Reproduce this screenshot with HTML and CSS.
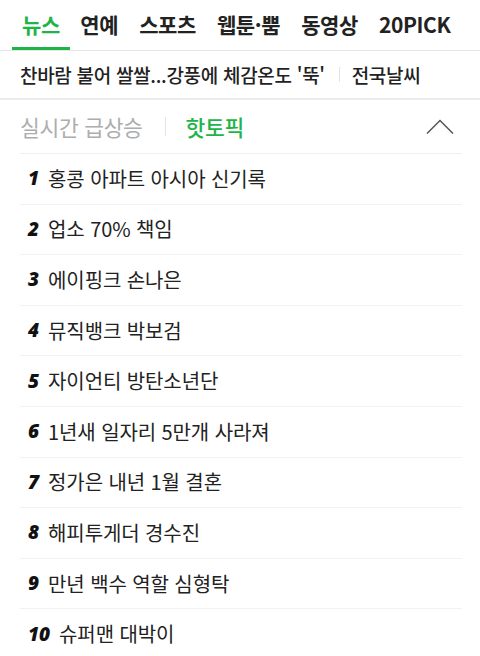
FILE: index.html
```html
<!DOCTYPE html>
<html lang="ko">
<head>
<meta charset="utf-8">
<link rel="stylesheet" href="styles.css">
</head>
<body>
<nav class="tabs">
  <a class="tab active">뉴스</a>
  <a class="tab">연예</a>
  <a class="tab">스포츠</a>
  <a class="tab">웹툰·뿜</a>
  <a class="tab">동영상</a>
  <a class="tab">20PICK</a>
</nav>
<div class="headline">
  <span class="headline-text">찬바람 불어 쌀쌀...강풍에 체감온도 '뚝'</span>
  <span class="vsep"></span>
  <span class="headline-link">전국날씨</span>
</div>
<section class="ranking">
  <div class="rank-head">
    <span class="rh-tab">실시간 급상승</span>
    <span class="vsep tall"></span>
    <span class="rh-tab on">핫토픽</span>
    <svg class="chev" width="28" height="16" viewBox="0 0 28 16"><polyline points="1,14.5 14,1.5 27,14.5" fill="none" stroke="#555" stroke-width="1.5"/></svg>
  </div>
  <ol class="rank-list">
    <li class="row"><span class="num">1</span><span class="title">홍콩 아파트 아시아 신기록</span></li>
    <li class="row"><span class="num">2</span><span class="title">업소 70% 책임</span></li>
    <li class="row"><span class="num">3</span><span class="title">에이핑크 손나은</span></li>
    <li class="row"><span class="num">4</span><span class="title">뮤직뱅크 박보검</span></li>
    <li class="row"><span class="num">5</span><span class="title">자이언티 방탄소년단</span></li>
    <li class="row"><span class="num">6</span><span class="title">1년새 일자리 5만개 사라져</span></li>
    <li class="row"><span class="num">7</span><span class="title">정가은 내년 1월 결혼</span></li>
    <li class="row"><span class="num">8</span><span class="title">해피투게더 경수진</span></li>
    <li class="row"><span class="num">9</span><span class="title">만년 백수 역할 심형탁</span></li>
    <li class="row"><span class="num">10</span><span class="title">슈퍼맨 대박이</span></li>
  </ol>
</section>
</body>
</html>
```
FILE: styles.css
```css
* { box-sizing: border-box; }
html, body { margin: 0; padding: 0; background: #fff; }
body {
  font-family: "Noto Sans CJK KR", "Noto Sans", sans-serif;
  color: #222;
  width: 480px;
  overflow: hidden;
}
.tabs {
  display: flex;
  height: 51px;
  padding-left: 12px;
  border-bottom: 1px solid #e6e6e6;
  white-space: nowrap;
}
.tab {
  display: flex;
  align-items: center;
  padding: 0 10.5px 0;
  font-size: 21px;
  font-weight: 700;
  letter-spacing: -0.4px;
  color: #222;
  border-bottom: 3px solid transparent;
}
.tab.active {
  color: #1eb548;
  border-bottom-color: #1eb548;
  padding: 0 10px 0;
}
.headline {
  display: flex;
  align-items: center;
  height: 49px;
  padding-left: 20px;
  border-bottom: 2px solid #ebebeb;
  font-size: 19px;
  font-weight: 500;
  color: #222;
  letter-spacing: -0.3px;
  white-space: nowrap;
}
.vsep {
  display: inline-block;
  width: 1px;
  height: 15px;
  background: #e3e3e3;
  margin: 0 12px 0 14px;
}
.vsep.tall { height: 19px; margin: 0 20px 0 22px; }
.ranking { padding: 0 18px 0 20px; }
.rank-head {
  display: flex;
  align-items: center;
  height: 54px;
  border-bottom: 1px solid #f0f0f0;
}
.rh-tab {
  font-size: 21.5px;
  color: #adadad;
  letter-spacing: -0.3px;
}
.rh-tab.on { color: #1eb548; font-weight: 500; }
.chev { margin-left: auto; margin-right: 8px; }
.rank-list { list-style: none; margin: 0; padding: 0; }
.row {
  display: flex;
  align-items: center;
  height: 50.6px;
  border-bottom: 1px solid #f2f2f2;
  font-size: 20px;
  white-space: nowrap;
  padding-bottom: 1px;
}
.num {
  font-family: "Open Sans", "Noto Sans", sans-serif;
  font-weight: 800;
  font-style: italic;
  font-size: 19px;
  color: #111;
  margin-left: 8px;
  margin-right: 9px;
}
.title { color: #222; letter-spacing: -0.1px; }
```
